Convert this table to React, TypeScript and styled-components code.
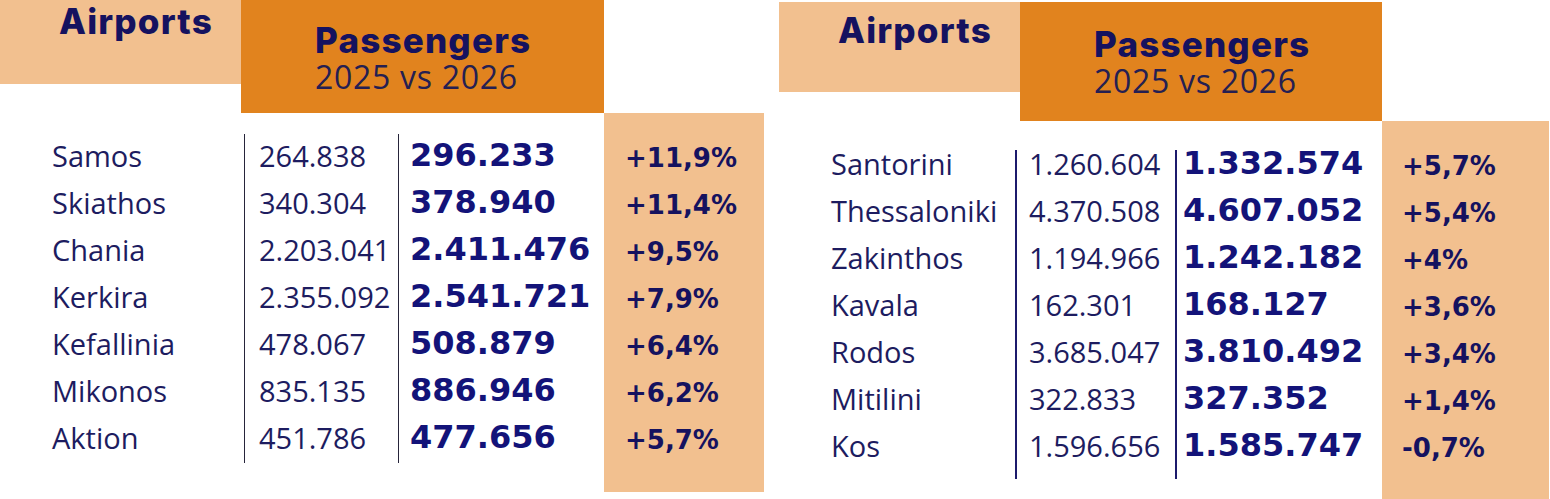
import React from 'react';
import styled, { createGlobalStyle } from 'styled-components';

const LIGHT = '#f2c08f';
const DARK = '#e1831e';
const HEAD = '#15125f';
const NAVY = '#131379';
const INK = '#1d1c60';

const GlobalStyle = createGlobalStyle`
    html, body {
        margin: 0;
        padding: 0;
        background: #fff;
    }
    body {
        font-family: "Open Sans", sans-serif;
    }
`;

const Page = styled.div`
    display: flex;
    align-items: flex-start;
    gap: 15px;
    width: 1550px;
    height: 499px;
    overflow: hidden;
`;

const Panel = styled.section<{ $top: number }>`
    display: flex;
    flex-direction: column;
    padding-top: ${p => p.$top}px;
`;

const Header = styled.div`
    display: flex;
    align-items: flex-start;
`;

const AirportsBox = styled.div<{ $h: number; $pt: number }>`
    box-sizing: border-box;
    width: 241px;
    height: ${p => p.$h}px;
    padding: ${p => p.$pt}px 0 0 59px;
    background: ${LIGHT};
    color: ${HEAD};
    font: 800 35px/1 Inter, "DejaVu Sans", sans-serif;
    letter-spacing: 1.2px;
`;

const PassengersBox = styled.div<{ $w: number; $h: number; $pt: number }>`
    box-sizing: border-box;
    width: ${p => p.$w}px;
    height: ${p => p.$h}px;
    padding: ${p => p.$pt}px 0 0 74px;
    background: ${DARK};
`;

const Title = styled.div`
    color: ${HEAD};
    font: 800 35px/1 Inter, "DejaVu Sans", sans-serif;
    letter-spacing: 1.2px;
`;

const Subtitle = styled.div`
    color: #251f52;
    font: 400 32px/37.6px "Open Sans", sans-serif;
    letter-spacing: 0.7px;
`;

const Body = styled.div<{ $cols: string }>`
    display: grid;
    grid-template-columns: ${p => p.$cols};
`;

const Column = styled.div<{ $pt: number; $pb: number; $band?: boolean }>`
    padding: ${p => p.$pt}px 0 ${p => p.$pb}px;
    background: ${p => (p.$band ? LIGHT : 'transparent')};
`;

const List = styled.div<{ $rule?: string; $pad: number }>`
    border-left: ${p => p.$rule || 'none'};
    padding-left: ${p => p.$pad}px;
`;

// line-height is picked so every font lands its baseline $base px below the row top
const Plain = styled.div<{ $base: number }>`
    height: 47px;
    color: ${INK};
    font: 400 29px "Open Sans", sans-serif;
    line-height: calc(${p => p.$base * 2}px - 0.776em);
    white-space: nowrap;
`;

const Bold = styled.div<{ $base: number }>`
    height: 47px;
    color: ${NAVY};
    font: 700 32px "DejaVu Sans", Verdana, sans-serif;
    line-height: calc(${p => p.$base * 2}px - 0.692em);
    white-space: nowrap;
`;

const Change = styled(Bold)`
    font-size: 26px;
    color: ${HEAD};
`;

type Row = [string, string, string, string];

const leftRows: Row[] = [
    ['Samos', '264.838', '296.233', '+11,9%'],
    ['Skiathos', '340.304', '378.940', '+11,4%'],
    ['Chania', '2.203.041', '2.411.476', '+9,5%'],
    ['Kerkira', '2.355.092', '2.541.721', '+7,9%'],
    ['Kefallinia', '478.067', '508.879', '+6,4%'],
    ['Mikonos', '835.135', '886.946', '+6,2%'],
    ['Aktion', '451.786', '477.656', '+5,7%'],
];

const rightRows: Row[] = [
    ['Santorini', '1.260.604', '1.332.574', '+5,7%'],
    ['Thessaloniki', '4.370.508', '4.607.052', '+5,4%'],
    ['Zakinthos', '1.194.966', '1.242.182', '+4%'],
    ['Kavala', '162.301', '168.127', '+3,6%'],
    ['Rodos', '3.685.047', '3.810.492', '+3,4%'],
    ['Mitilini', '322.833', '327.352', '+1,4%'],
    ['Kos', '1.596.656', '1.585.747', '-0,7%'],
];

interface TableProps {
    rows: Row[];
    top: number;
    airportsH: number;
    airportsPt: number;
    passW: number;
    passH: number;
    passPt: number;
    cols: [number, number, number, number];
    pads: [number, number, number, number];
    listTop: number;
    listBottom: number;
    base: number;
    rule: string;
}

const Table: React.FC<TableProps> = ({ rows, top, airportsH, airportsPt, passW, passH, passPt, cols, pads, listTop, listBottom, base, rule }) => (
    <Panel $top={top}>
        <Header>
            <AirportsBox $h={airportsH} $pt={airportsPt}>Airports</AirportsBox>
            <PassengersBox $w={passW} $h={passH} $pt={passPt}>
                <Title>Passengers</Title>
                <Subtitle>2025 vs 2026</Subtitle>
            </PassengersBox>
        </Header>
        <Body $cols={cols.map(c => `${c}px`).join(' ')}>
            <Column $pt={listTop} $pb={listBottom}>
                <List $pad={pads[0]}>
                    {rows.map(r => <Plain key={r[0]} $base={base}>{r[0]}</Plain>)}
                </List>
            </Column>
            <Column $pt={listTop} $pb={listBottom}>
                <List $pad={pads[1]} $rule={rule}>
                    {rows.map(r => <Plain key={r[0]} $base={base}>{r[1]}</Plain>)}
                </List>
            </Column>
            <Column $pt={listTop} $pb={listBottom}>
                <List $pad={pads[2]} $rule={rule}>
                    {rows.map(r => <Bold key={r[0]} $base={base}>{r[2]}</Bold>)}
                </List>
            </Column>
            <Column $pt={listTop} $pb={listBottom} $band>
                <List $pad={pads[3]}>
                    {rows.map(r => <Change key={r[0]} $base={base}>{r[3]}</Change>)}
                </List>
            </Column>
        </Body>
    </Panel>
);

export default function App() {
    return (
        <>
            <GlobalStyle />
            <Page>
                <Table
                    rows={leftRows}
                    top={0}
                    airportsH={84}
                    airportsPt={4}
                    passW={363}
                    passH={113}
                    passPt={23}
                    cols={[244, 154, 206, 160]}
                    pads={[52, 14, 11, 21]}
                    listTop={21}
                    listBottom={29}
                    base={33}
                    rule="1px solid #26243a"
                />
                <Table
                    rows={rightRows}
                    top={2}
                    airportsH={90}
                    airportsPt={11}
                    passW={362}
                    passH={119}
                    passPt={25}
                    cols={[236, 160, 207, 167]}
                    pads={[52, 12, 6, 20]}
                    listTop={29}
                    listBottom={20}
                    base={25}
                    rule="2px solid #1c1a6c"
                />
            </Page>
        </>
    );
}
